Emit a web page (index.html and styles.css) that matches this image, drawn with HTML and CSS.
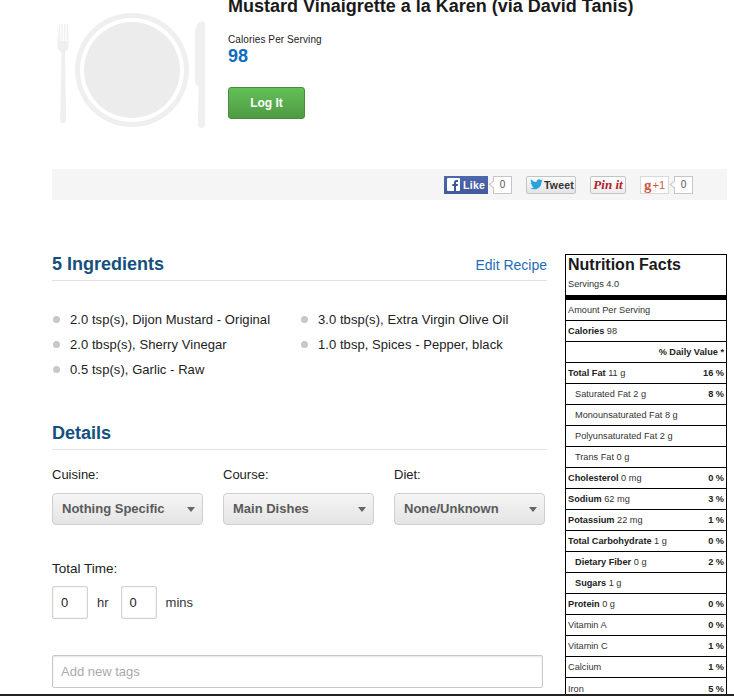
FILE: index.html
```html
<!DOCTYPE html>
<html lang="en">
<head>
    <meta charset="UTF-8">
    <title>Mustard Vinaigrette a la Karen (via David Tanis)</title>
    <link rel="stylesheet" href="styles.css">
</head>
<body>
    <div class="page">
        <div class="recipe-head">
            <svg class="plate" width="154" height="116" viewBox="0 0 154 116">
                <path fill="#efefef" d="M7 12h1.200v17h1.300V12h1.300v17h1.300V12h1.300v17h1.300V12H16l.6 21c0 4-2 6-3.600 7l1.200 68c0 2-1 3-2 3h-2c-1.300 0-2-1-2-3l1.300-68C7 39 5 37 5.500 33z"/>
                <circle cx="80" cy="58" r="57" fill="#efefef"/>
                <circle cx="80" cy="58" r="52" fill="#fff"/>
                <circle cx="80" cy="58" r="48" fill="#ececec"/>
                <path fill="#efefef" d="M148 10c-3 1-5 6-5 14v46c0 2 1 3 3.500 4l-.5 39c0 2 1 3 3.500 3s3.500-1 3.500-3V11c0-1-2-2-5-1z"/>
            </svg>
            <div class="recipe-info">
                <h1>Mustard Vinaigrette a la Karen (via David Tanis)</h1>
                <div class="cal-label">Calories Per Serving</div>
                <div class="cal-value">98</div>
                <button class="log-btn">Log It</button>
            </div>
        </div>

        <div class="share-bar">
            <div class="share fb-group">
                <span class="fb-like"><svg width="13" height="13" viewBox="0 0 13 13"><rect width="13" height="13" rx="1" fill="#fff"/><path fill="#3b5998" d="M9 13V8h1.700l.3-2H9V5c0-.7.2-1.100 1.100-1.100H11V2.100C10.700 2 10.100 2 9.500 2 8 2 7 2.900 7 4.600V6H5.300v2H7v5z"/></svg>Like</span>
                <span class="count">0</span>
            </div>
            <span class="tweet"><svg width="13" height="11" viewBox="0 0 14 12"><path fill="#2aa3dc" d="M14 1.500c-.5.2-1 .4-1.600.5.600-.4 1-.9 1.200-1.600-.5.300-1.100.6-1.800.7A2.900 2.900 0 0 0 6.900 3.300C4.500 3.200 2.400 2 1 .3c-.8 1.300-.4 3 .9 3.900-.5 0-.9-.1-1.300-.4 0 1.400 1 2.600 2.300 2.900-.4.100-.9.100-1.300 0 .4 1.200 1.400 2 2.700 2A5.800 5.800 0 0 1 0 10c1.300.8 2.800 1.300 4.400 1.300 5.300 0 8.300-4.500 8.100-8.500.6-.4 1.100-.8 1.500-1.300z"/></svg>Tweet</span>
            <span class="pin">Pin it</span>
            <div class="share gplus-group">
                <span class="gplus"><b>g</b>+1</span>
                <span class="count">0</span>
            </div>
        </div>

        <div class="columns">
            <div class="main">
                <div class="section-head">
                    <h2>5 Ingredients</h2>
                    <a class="edit-link" href="#">Edit Recipe</a>
                </div>
                <ul class="ingredients">
                    <li>2.0 tsp(s), Dijon Mustard - Original</li>
                    <li>3.0 tbsp(s), Extra Virgin Olive Oil</li>
                    <li>2.0 tbsp(s), Sherry Vinegar</li>
                    <li>1.0 tbsp, Spices - Pepper, black</li>
                    <li>0.5 tsp(s), Garlic - Raw</li>
                </ul>

                <div class="section-head details-head">
                    <h2>Details</h2>
                </div>
                <div class="selects">
                    <div class="select-col">
                        <label>Cuisine:</label>
                        <div class="fake-select">Nothing Specific</div>
                    </div>
                    <div class="select-col">
                        <label>Course:</label>
                        <div class="fake-select">Main Dishes</div>
                    </div>
                    <div class="select-col">
                        <label>Diet:</label>
                        <div class="fake-select">None/Unknown</div>
                    </div>
                </div>

                <label class="time-label">Total Time:</label>
                <div class="time-row">
                    <span class="time-box">0</span><span class="time-unit">hr</span>
                    <span class="time-box">0</span><span class="time-unit">mins</span>
                </div>

                <div class="tags-input">Add new tags</div>
            </div>

            <div class="nutrition">
                <div class="nf-title">Nutrition Facts</div>
                <div class="nf-servings">Servings 4.0</div>
                <div class="nf-row">Amount Per Serving</div>
                <div class="nf-row"><span><b>Calories</b> 98</span></div>
                <div class="nf-row nf-right"><b>% Daily Value *</b></div>
                <div class="nf-row"><span><b>Total Fat</b> 11 g</span><b>16 %</b></div>
                <div class="nf-row nf-sub"><span>Saturated Fat 2 g</span><b>8 %</b></div>
                <div class="nf-row nf-sub"><span>Monounsaturated Fat 8 g</span></div>
                <div class="nf-row nf-sub"><span>Polyunsaturated Fat 2 g</span></div>
                <div class="nf-row nf-sub"><span>Trans Fat 0 g</span></div>
                <div class="nf-row"><span><b>Cholesterol</b> 0 mg</span><b>0 %</b></div>
                <div class="nf-row"><span><b>Sodium</b> 62 mg</span><b>3 %</b></div>
                <div class="nf-row"><span><b>Potassium</b> 22 mg</span><b>1 %</b></div>
                <div class="nf-row"><span><b>Total Carbohydrate</b> 1 g</span><b>0 %</b></div>
                <div class="nf-row nf-sub"><span><b>Dietary Fiber</b> 0 g</span><b>2 %</b></div>
                <div class="nf-row nf-sub"><span><b>Sugars</b> 1 g</span></div>
                <div class="nf-row"><span><b>Protein</b> 0 g</span><b>0 %</b></div>
                <div class="nf-row"><span>Vitamin A</span><b>0 %</b></div>
                <div class="nf-row"><span>Vitamin C</span><b>1 %</b></div>
                <div class="nf-row"><span>Calcium</span><b>1 %</b></div>
                <div class="nf-row"><span>Iron</span><b>5 %</b></div>
            </div>
        </div>
    </div>
</body>
</html>
```

FILE: styles.css
```css
html, body {
    margin: 0;
    padding: 0;
    height: 696px;
    overflow: hidden;
    background-color: #fff;
}
body {
    font-family: "Liberation Sans", Arial, sans-serif;
    color: #222;
}
.page {
    box-sizing: border-box;
    height: 696px;
    padding-left: 52px;
    padding-right: 7px;
    border-bottom: 2px solid #222;
    overflow: hidden;
}

/* Top of recipe */
.recipe-head {
    display: flex;
    height: 169px;
}
.plate {
    margin-top: 12px;
    flex: none;
}
.recipe-info {
    margin-left: 22px;
}
h1 {
    font-size: 18px;
    line-height: 20px;
    margin: -4px 0 0;
    color: #1a1a1a;
}
.cal-label {
    font-size: 10px;
    line-height: 12px;
    letter-spacing: .1px;
    margin-top: 18px;
}
.cal-value {
    font-size: 18px;
    font-weight: bold;
    line-height: 20px;
    color: #0f6cbd;
}
.log-btn {
    display: block;
    width: 77px;
    height: 32px;
    margin-top: 21px;
    padding: 0;
    font-family: inherit;
    font-size: 12px;
    font-weight: bold;
    color: #fff;
    border: 1px solid #4a8a3c;
    border-radius: 3px;
    background: linear-gradient(#62c057, #4f9a43);
}

/* Social buttons */
.share-bar {
    display: flex;
    align-items: center;
    height: 31px;
    padding-left: 392px;
    background-color: #f5f5f5;
}
.share {
    display: flex;
    align-items: center;
}
.fb-like {
    display: flex;
    align-items: center;
    gap: 3px;
    box-sizing: border-box;
    width: 44px;
    height: 18px;
    padding-left: 3px;
    font-size: 10.5px;
    font-weight: bold;
    letter-spacing: .3px;
    color: #fff;
    background: linear-gradient(#4d68ad, #43599c);
}
.count {
    position: relative;
    box-sizing: border-box;
    width: 19px;
    height: 18px;
    margin-left: 5px;
    font-size: 10px;
    line-height: 16px;
    text-align: center;
    color: #555;
    background-color: #fff;
    border: 1px solid #c6c6c6;
}
.count::before {
    content: "";
    position: absolute;
    left: -4px;
    top: 5px;
    width: 5px;
    height: 5px;
    background-color: #fff;
    border-left: 1px solid #c6c6c6;
    border-bottom: 1px solid #c6c6c6;
    box-sizing: border-box;
    transform: rotate(45deg);
}
.tweet {
    display: flex;
    align-items: center;
    gap: 1px;
    box-sizing: border-box;
    width: 50px;
    height: 18px;
    margin-left: 14px;
    padding-left: 3px;
    font-size: 10.5px;
    font-weight: bold;
    letter-spacing: .2px;
    color: #333;
    border: 1px solid #c4c4c4;
    border-radius: 2px;
    background: linear-gradient(#fafafa, #e4e4e4);
}
.pin {
    box-sizing: border-box;
    width: 36px;
    height: 18px;
    margin-left: 14px;
    font-family: "Liberation Serif", serif;
    font-size: 13px;
    font-weight: bold;
    font-style: italic;
    line-height: 16px;
    text-align: center;
    white-space: nowrap;
    color: #b5202a;
    border: 1px solid #c4c4c4;
    border-radius: 2px;
    background: linear-gradient(#fff, #ececec);
}
.gplus-group {
    margin-left: 14px;
}
.gplus {
    display: flex;
    justify-content: center;
    align-items: center;
    box-sizing: border-box;
    width: 29px;
    height: 18px;
    font-size: 11px;
    white-space: nowrap;
    color: #d2553f;
    background-color: #fff;
    border: 1px solid #d8d8d8;
}
.gplus b {
    font-family: "Liberation Serif", serif;
    font-size: 15px;
    line-height: 12px;
    margin-right: 1px;
}

.columns {
    display: flex;
    justify-content: space-between;
    margin-top: 54px;
}
.main {
    width: 495px;
}
.section-head {
    display: flex;
    justify-content: space-between;
    align-items: flex-end;
    height: 26px;
    border-bottom: 1px solid #e2e2e2;
}
h2 {
    font-size: 18px;
    line-height: 20px;
    margin: 0 0 6px;
    color: #14507f;
}
.edit-link {
    font-size: 14px;
    line-height: 16px;
    margin-bottom: 7px;
    color: #1f6cb8;
    text-decoration: none;
}

/* Ingredients list */
.ingredients {
    display: grid;
    grid-template-columns: 248px 1fr;
    grid-auto-rows: 25px;
    list-style: none;
    margin: 26px 0 0;
    padding: 0;
    font-size: 13px;
    letter-spacing: .06px;
}
.ingredients li {
    display: flex;
    align-items: center;
    line-height: 25px;
    color: #222;
}
.ingredients li::before {
    content: "";
    width: 7px;
    height: 7px;
    margin: 0 10px 0 1px;
    border-radius: 50%;
    background-color: #c8c8c8;
}
.details-head {
    margin-top: 41px;
}

/* Selects */
.selects {
    display: flex;
    gap: 20px;
    margin-top: 17px;
}
.select-col label, .time-label {
    display: block;
    font-size: 13px;
    line-height: 16px;
    color: #222;
}
.fake-select {
    position: relative;
    box-sizing: border-box;
    width: 151px;
    height: 32px;
    margin-top: 10px;
    padding-left: 9px;
    font-size: 13px;
    font-weight: bold;
    line-height: 30px;
    color: #5a5a5a;
    border: 1px solid #cfcfcf;
    border-radius: 4px;
    background: linear-gradient(#f5f5f5, #e4e4e4);
}
.fake-select::after {
    content: "";
    position: absolute;
    right: 7px;
    top: 13px;
    border-left: 4px solid transparent;
    border-right: 4px solid transparent;
    border-top: 5px solid #666;
}
.time-label {
    margin-top: 36px;
    font-size: 13.5px;
}
.time-row {
    display: flex;
    align-items: center;
    margin-top: 9px;
    font-size: 13px;
}
.time-box {
    box-sizing: border-box;
    width: 36px;
    height: 33px;
    padding-left: 8px;
    line-height: 31px;
    font-size: 13px;
    border: 1px solid #d2d2d2;
    border-radius: 2px;
    box-shadow: inset 0 0 2px #ddd;
}
.time-unit {
    margin: 0 12px 0 9px;
    color: #333;
}
.tags-input {
    box-sizing: border-box;
    width: 491px;
    height: 33px;
    margin-top: 36px;
    padding-left: 8px;
    font-size: 13px;
    line-height: 31px;
    color: #aaa;
    border: 1px solid #c9c9c9;
    border-radius: 2px;
    box-shadow: inset 0 1px 2px #e4e4e4;
}

/* Nutrition label */
.nutrition {
    box-sizing: border-box;
    width: 162px;
    height: 440px;
    border: 1px solid #000;
    border-bottom: none;
    font-size: 9.2px;
    color: #333;
}
.nf-title {
    font-size: 16px;
    font-weight: bold;
    line-height: 20px;
    padding: 0 2px;
    color: #1a1a1a;
}
.nf-servings {
    height: 20px;
    padding: 0 2px;
    line-height: 19px;
    border-bottom: 5px solid #000;
}
.nf-row {
    display: flex;
    justify-content: space-between;
    align-items: center;
    box-sizing: border-box;
    height: 21px;
    padding: 0 2px;
    border-bottom: 1px solid #000;
}
.nf-row:last-child {
    border-bottom: none;
}
.nf-row b {
    color: #222;
}
.nf-right {
    justify-content: flex-end;
}
.nf-sub {
    padding-left: 9px;
}
```
